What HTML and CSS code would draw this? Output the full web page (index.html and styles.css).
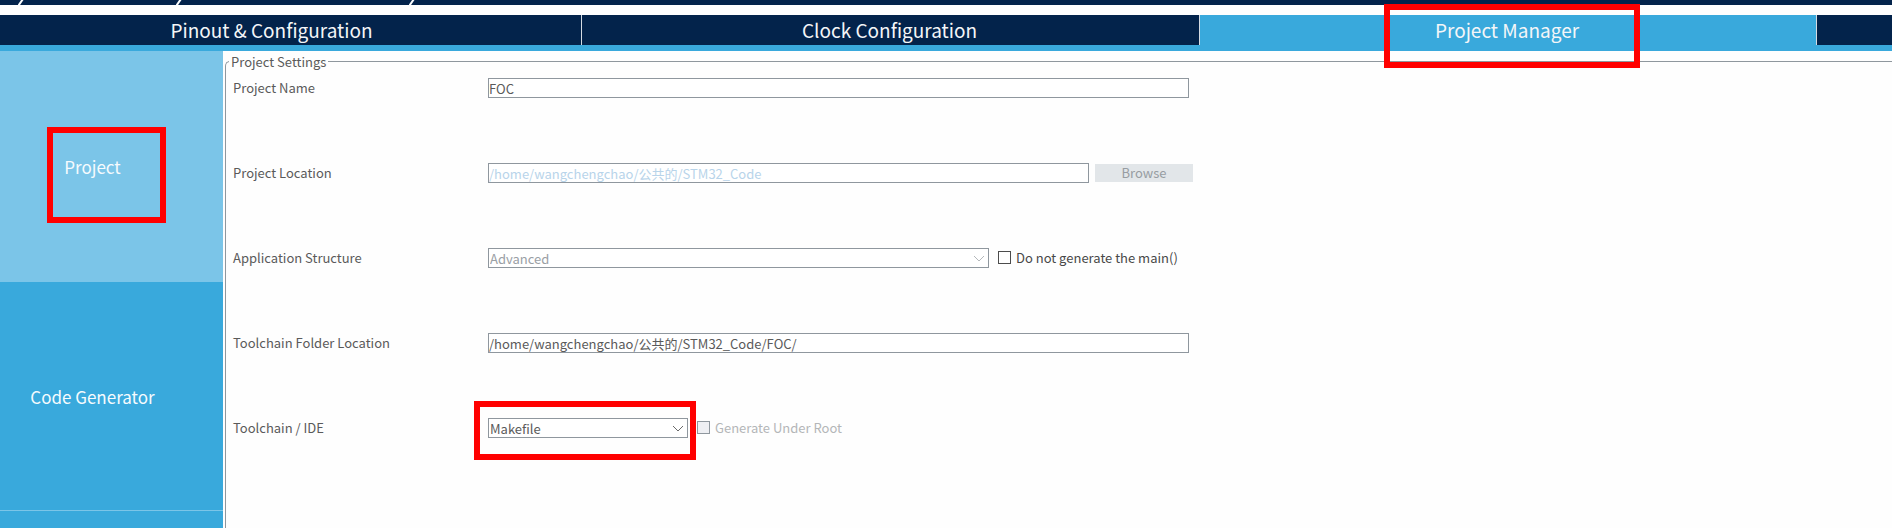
FILE: index.html
```html
<!DOCTYPE html>
<html lang="en">
<head>
<meta charset="utf-8">
<title>Project Manager</title>
<link rel="stylesheet" href="styles.css">
</head>
<body>
<div class="app">
  <div class="breadcrumb">
    <svg class="slash slash-first" viewBox="0 0 6 5"><path d="M0.5 5.5L5 -1"/></svg>
    <svg class="slash slash-second" viewBox="0 0 6 5"><path d="M0.5 5.5L5 -1"/></svg>
    <svg class="slash slash-third" viewBox="0 0 6 5"><path d="M0.5 5.5L5 -1"/></svg>
  </div>
  <nav class="tabs">
    <button class="tab tab-first" type="button">Pinout &amp; Configuration</button>
    <button class="tab" type="button">Clock Configuration</button>
    <button class="tab tab-active" type="button">Project Manager<span class="mark mark-tab"></span></button>
    <button class="tab" type="button" aria-label="Tools"></button>
  </nav>
  <div class="body">
    <aside class="sidebar">
      <button class="side side-active" type="button">Project<span class="mark mark-side"></span></button>
      <button class="side" type="button">Code Generator</button>
      <button class="side side-rest" type="button" aria-label="Advanced Settings"></button>
    </aside>
    <main class="main">
      <fieldset class="settings">
        <legend class="legend">Project Settings</legend>
        <div class="rows">
          <div class="row">
            <label class="label" for="name">Project Name</label>
            <div class="controls"><input class="field" id="name" type="text" value="FOC"></div>
          </div>
          <div class="row">
            <label class="label" for="location">Project Location</label>
            <div class="controls">
              <input class="field field-location" id="location" type="text" value="/home/wangchengchao/公共的/STM32_Code" disabled>
              <button class="browse" type="button" disabled>Browse</button>
            </div>
          </div>
          <div class="row">
            <label class="label" for="structure">Application Structure</label>
            <div class="controls">
              <div class="combo combo-wide">
                <select class="select" id="structure" disabled><option>Advanced</option></select>
                <svg class="chevron chevron-off" viewBox="0 0 12 8"><path d="M1 1L6 6L11 1"/></svg>
              </div>
              <label class="check"><input class="box" type="checkbox">Do not generate the main()</label>
            </div>
          </div>
          <div class="row">
            <label class="label" for="folder">Toolchain Folder Location</label>
            <div class="controls"><input class="field" id="folder" type="text" value="/home/wangchengchao/公共的/STM32_Code/FOC/"></div>
          </div>
          <div class="row">
            <label class="label" for="toolchain">Toolchain / IDE</label>
            <div class="controls">
              <div class="combo">
                <select class="select" id="toolchain"><option>Makefile</option></select>
                <svg class="chevron" viewBox="0 0 12 8"><path d="M1 1L6 6L11 1"/></svg>
                <span class="mark mark-combo"></span>
              </div>
              <label class="check check-off"><input class="box" type="checkbox" disabled>Generate Under Root</label>
            </div>
          </div>
        </div>
      </fieldset>
    </main>
  </div>
</div>
</body>
</html>
```
FILE: styles.css
```css
* {
  box-sizing: border-box;
}

body {
  margin: 0;
  overflow: hidden;
  background: #fefefe;
  font-family: "Noto Sans CJK SC", "Noto Sans", sans-serif;
  font-size: 13px;
  line-height: 20px;
  color: #5a5a5a;
}

button,
input,
select {
  margin: 0;
  padding: 0;
  border: 0;
  border-radius: 0;
  font: inherit;
  color: inherit;
}

.app {
  display: flex;
  flex-direction: column;
  height: 100vh;
}

.breadcrumb {
  display: flex;
  flex: none;
  height: 5px;
  margin-bottom: 10px;
  background: #03234b;
}

.slash {
  flex: none;
  width: 6px;
  height: 5px;
  fill: none;
  stroke: #ffffff;
  stroke-width: 2;
}

.slash-first {
  margin-left: 18px;
}

.slash-second {
  margin-left: 152px;
}

.slash-third {
  margin-left: 227px;
}

.tabs {
  display: grid;
  flex: none;
  grid-template-columns: 582fr 618fr 617fr 75fr;
  height: 36px;
  border-bottom: 6px solid #39a9dc;
}

.tab {
  position: relative;
  padding-right: 2px;
  background: #03234b;
  border-right: 1px solid #d5dbe2;
  color: #f4f6f8;
  font-size: 19px;
  line-height: 30px;
}

.tab:last-child {
  border-right: 0;
}

.tab-first {
  padding-right: 38px;
}

.tab-active {
  background: #39a9dc;
}

.body {
  display: flex;
  flex: 1;
  min-height: 0;
}

.sidebar {
  display: flex;
  flex: none;
  flex-direction: column;
  width: 223px;
  background: #39a9dc;
}

.side {
  position: relative;
  flex: none;
  height: 229px;
  padding: 2px 38px 0 0;
  background: #39a9dc;
  border-bottom: 1px solid #7bc5e8;
  color: #f6fbfe;
  font-size: 17px;
}

.side-active {
  height: 231px;
  background: #7bc5e8;
}

.side-rest {
  flex: 1;
  height: auto;
  border-bottom: 0;
}

.main {
  flex: 1;
  min-width: 0;
}

.settings {
  height: 100%;
  min-width: 0;
  margin: 0 0 0 2px;
  padding: 0 0 0 7px;
  border: 1px solid #8f979e;
  border-right: 0;
  border-bottom: 0;
  border-radius: 5px 0 0 0;
}

.legend {
  margin-left: -4px;
  padding: 1px 2px 0;
}

.rows {
  display: grid;
  gap: 65px;
  padding-top: 5px;
}

.row {
  display: grid;
  grid-template-columns: 255px minmax(0, 1fr);
  height: 20px;
}

.label {
  padding-top: 1px;
  white-space: nowrap;
}

.controls {
  display: flex;
  align-items: center;
}

.field,
.select {
  height: 20px;
  background: #ffffff;
  border: 1px solid #8f979e;
  line-height: 17px;
}

.field {
  width: 701px;
  padding-top: 1px;
}

.field-location {
  width: 601px;
}

.field:disabled {
  color: #b8d4ea;
}

.browse {
  width: 98px;
  height: 18px;
  margin-left: 6px;
  background: #e2e6e9;
  color: #979da2;
  line-height: 18px;
}

.combo {
  position: relative;
  width: 200px;
  height: 20px;
}

.combo-wide {
  width: 501px;
}

.select {
  display: block;
  width: 100%;
  padding: 1px 1px 0;
  appearance: none;
  opacity: 1;
}

.select:disabled {
  color: #9aa0a5;
}

.chevron {
  position: absolute;
  top: 7px;
  right: 4px;
  width: 12px;
  height: 8px;
  fill: none;
  stroke: #6a6a6a;
  pointer-events: none;
}

.chevron-off {
  stroke: #b4b8bb;
}

.check {
  display: flex;
  gap: 5px;
  align-items: center;
  margin-left: 9px;
  color: #484848;
}

.check-off {
  color: #b4b6b8;
}

.box {
  width: 13px;
  height: 13px;
  appearance: none;
  background: #ffffff;
  border: 1px solid #4c4c4c;
}

.box:disabled {
  background: #eeeff3;
  border-color: #8f979e;
}

.mark {
  position: absolute;
  z-index: 1;
  border: 6px solid #ff0000;
  pointer-events: none;
}

.mark-tab {
  top: -11px;
  left: 184px;
  width: 256px;
  height: 64px;
}

.mark-side {
  top: 76px;
  left: 47px;
  width: 119px;
  height: 96px;
}

.mark-combo {
  top: -17px;
  left: -14px;
  width: 222px;
  height: 59px;
}
```
